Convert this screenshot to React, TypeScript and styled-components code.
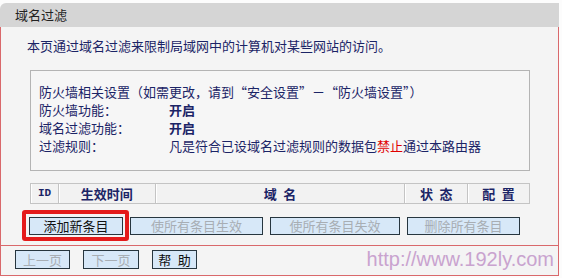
import React from 'react';
import styled, { createGlobalStyle } from 'styled-components';

const GlobalStyle = createGlobalStyle`
  html, body {
    margin: 0;
    padding: 0;
    background: #fcfcfc;
    font-family: "Noto Sans CJK SC", "Liberation Sans", sans-serif;
  }
`;

const TEXT = '#1b2466';
const RED_LINE = '#d9686b';

const cols = [
  { label: 'ID', width: 28, mono: true },
  { label: '生效时间', width: 97 },
  { label: '域\u2002名', width: 250 },
  { label: '状\u2002态', width: 63 },
  { label: '配\u2002置', width: 62 },
];

const info = [
  { label: '防火墙功能：', value: '开启' },
  { label: '域名过滤功能：', value: '开启' },
];

const DomainFilter = () => {
  return (
    <Page>
      <GlobalStyle />
      <Panel>
        <Header>域名过滤</Header>
        <Body>
          <Intro>本页通过域名过滤来限制局域网中的计算机对某些网站的访问。</Intro>
          <InfoBox>
            <InfoLine>防火墙相关设置（如需更改，请到“安全设置”－“防火墙设置”）</InfoLine>
            {info.map((row) => (
              <InfoLine key={row.label}>
                <Label>{row.label}</Label>
                <Value>{row.value}</Value>
              </InfoLine>
            ))}
            <InfoLine>
              <Label>过滤规则：</Label>
              <span>
                凡是符合已设域名过滤规则的数据包<Forbid>禁止</Forbid>通过本路由器
              </span>
            </InfoLine>
          </InfoBox>
          <TableHead>
            {cols.map((c) => (
              <HeadCell key={c.label} $w={c.width} $mono={c.mono}>
                {c.label}
              </HeadCell>
            ))}
          </TableHead>
          <ActionRow>
            <Highlight>
              <Button $w={94}>添加新条目</Button>
            </Highlight>
            <Button $w={133} disabled>
              使所有条目生效
            </Button>
            <Button $w={130} disabled>
              使所有条目失效
            </Button>
            <Button $w={113} disabled>
              删除所有条目
            </Button>
          </ActionRow>
        </Body>
        <Footer>
          <NavButtons>
            <SmallButton $w={55} disabled>
              上一页
            </SmallButton>
            <SmallButton $w={56} disabled>
              下一页
            </SmallButton>
            <SmallButton $w={45}>帮{'\u2002'}助</SmallButton>
          </NavButtons>
          <Watermark>http://www.192ly.com</Watermark>
        </Footer>
      </Panel>
    </Page>
  );
};

export default function App() {
  return <DomainFilter />;
}

const Page = styled.div`
  width: 562px;
  height: 278px;
  padding-top: 3px;
  box-sizing: border-box;
  overflow: hidden;
`;

const Panel = styled.div`
  width: 559px;
  display: flex;
  flex-direction: column;
`;

//标题栏
const Header = styled.div`
  height: 24px;
  line-height: 24px;
  background: #d5d5d5;
  border-top-left-radius: 6px;
  padding-left: 15px;
  font-size: 13px;
  color: #222;
`;

const Body = styled.div`
  height: 219px;
  box-sizing: border-box;
  border-left: 1px solid ${RED_LINE};
  border-right: 1px solid ${RED_LINE};
  border-bottom: 1px solid ${RED_LINE};
  background: #f4f4f4;
  display: flex;
  flex-direction: column;
`;

const Intro = styled.div`
  margin: 11px 0 0 26px;
  line-height: 16px;
  font-size: 13px;
  color: ${TEXT};
`;

const InfoBox = styled.div`
  margin: 16px 0 0 29px;
  width: 500px;
  height: 101px;
  box-sizing: border-box;
  border: 1px solid #b4b4b4;
  padding: 12px 0 0 8px;
  background: #f6f6f6;
`;

const InfoLine = styled.div`
  display: flex;
  height: 18px;
  line-height: 18px;
  font-size: 13px;
  color: ${TEXT};
  white-space: nowrap;
`;

const Label = styled.span`
  width: 130px;
`;

const Value = styled.span`
  font-weight: 700;
`;

const Forbid = styled.span`
  color: #e00000;
`;

//表头
const TableHead = styled.div`
  margin: 12px 0 0 29px;
  width: 500px;
  height: 21px;
  display: flex;
  border-top: 1px solid #c4c4c4;
  border-bottom: 1px solid #c4c4c4;
  border-left: 1px solid #c4c4c4;
  box-sizing: border-box;
`;

const HeadCell = styled.div<{ $w: number; $mono?: boolean }>`
  width: ${(p) => p.$w}px;
  box-sizing: border-box;
  border-right: 1px solid #c4c4c4;
  box-shadow: inset 1px 0 0 #ffffff;
  background: #f2f2f2;
  text-align: center;
  line-height: 19px;
  font-size: ${(p) => (p.$mono ? '11px' : '13px')};
  font-family: ${(p) =>
    p.$mono ? '"Liberation Mono", monospace' : '"Noto Sans CJK SC", sans-serif'};
  font-weight: 700;
  color: ${TEXT};
`;

//按钮
const ActionRow = styled.div`
  margin: 13px 0 0 28px;
  display: flex;
  gap: 7px;
`;

const Highlight = styled.div`
  position: relative;
  display: flex;
  &::before {
    content: '';
    position: absolute;
    left: -7px;
    top: -7px;
    right: -6px;
    bottom: -6px;
    border: 4px solid #e41b1b;
    border-radius: 3px;
  }
`;

const Button = styled.button<{ $w: number }>`
  width: ${(p) => p.$w}px;
  height: 18px;
  padding: 0;
  margin: 0;
  background: #d7e8f8;
  border: 1px solid #27363f;
  font-family: "Noto Sans CJK SC", sans-serif;
  font-size: 13px;
  line-height: 16px;
  color: #111;
  &:disabled {
    color: #a8aeb4;
  }
`;

const Footer = styled.div`
  height: 30px;
  box-sizing: border-box;
  border-left: 1px solid ${RED_LINE};
  border-right: 1px solid ${RED_LINE};
  border-bottom: 1px solid ${RED_LINE};
  background: #f4f4f4;
  display: flex;
  align-items: flex-start;
  justify-content: space-between;
`;

const NavButtons = styled.div`
  display: flex;
  gap: 13px;
  margin: 4px 0 0 14px;
`;

const SmallButton = styled(Button)`
  height: 19px;
`;

const Watermark = styled.div`
  font-family: "Liberation Sans", Arial, sans-serif;
  font-size: 20px;
  line-height: 22px;
  margin: 2px 4px 0 0;
  color: #c9a3cf;
`;
